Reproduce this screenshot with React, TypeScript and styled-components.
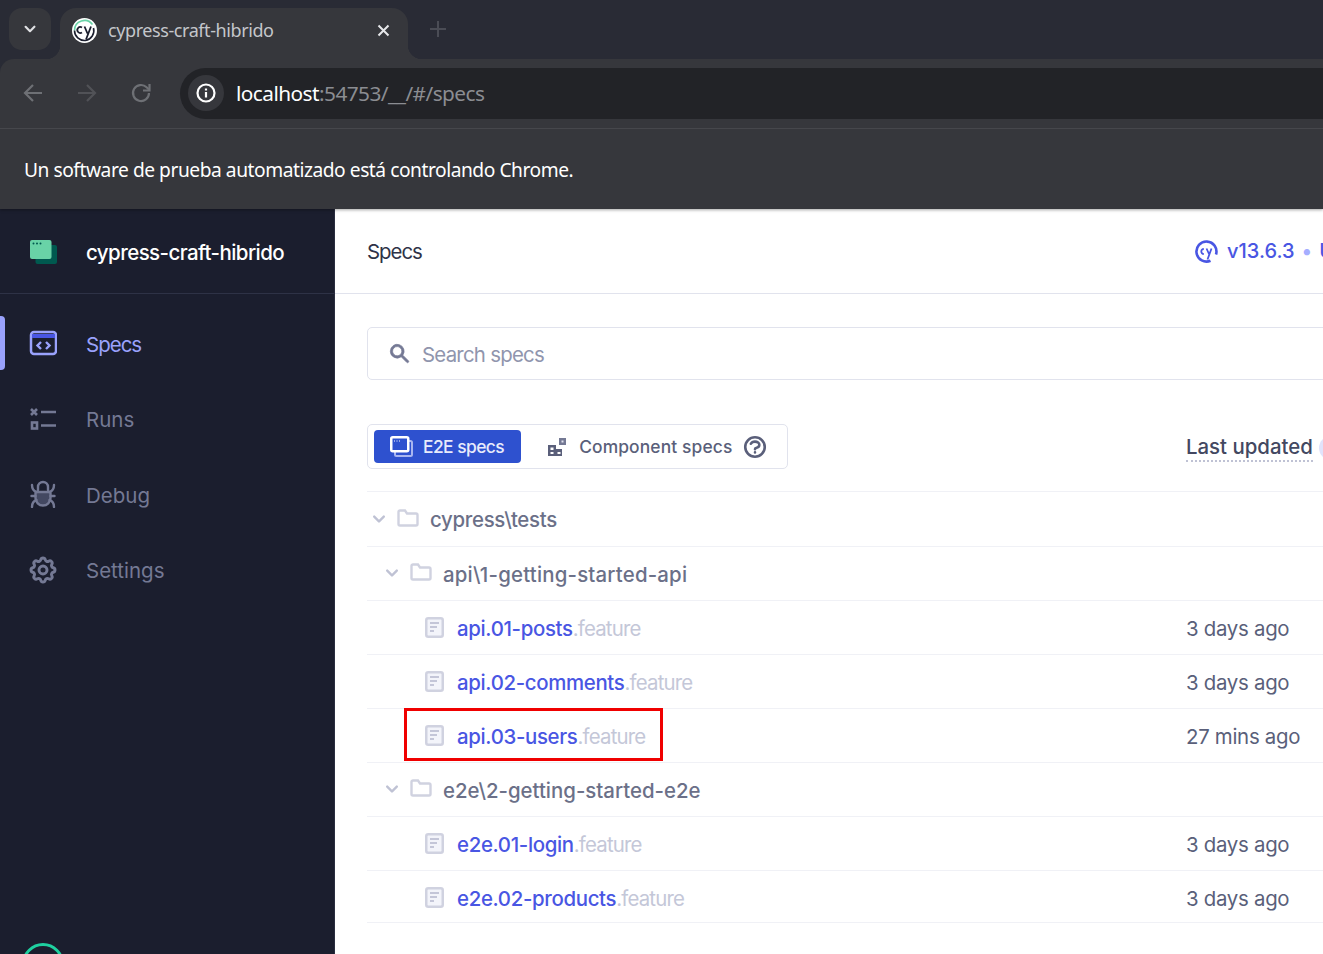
import styled, { createGlobalStyle } from 'styled-components';
import { HiChevronDown, HiOutlineCog, HiOutlineQuestionMarkCircle, HiSearch } from 'react-icons/hi';

const GlobalStyle = createGlobalStyle`
  html, body {
    margin: 0;
    padding: 0;
    height: 100%;
    overflow: hidden;
    background: #fff;
  }
  * { box-sizing: border-box; }
`;

const Page = styled.div`
  width: 1323px;
  height: 954px;
  overflow: hidden;
  display: flex;
  flex-direction: column;
`;

const BrowserFrame = styled.div`
  flex: none;
  font-family: 'Noto Sans', sans-serif;
  background: #292b35;
  position: relative;
  z-index: 2;
  box-shadow: 0 1px 3px rgba(0, 0, 0, 0.35);
`;

const TabStrip = styled.div`
  height: 59px;
  display: flex;
  align-items: flex-start;
  padding: 8px 0 0 9px;
`;

const TabSearch = styled.div`
  width: 42px;
  height: 42px;
  border-radius: 13px;
  background: #36373c;
  color: #dfe0e3;
  display: flex;
  align-items: center;
  justify-content: center;
  font-size: 22px;
`;

const Tab = styled.div`
  position: relative;
  margin-left: 9px;
  width: 348px;
  height: 51px;
  background: #36373c;
  border-radius: 16px 16px 0 0;
  display: flex;
  align-items: center;
  padding: 0 16px 7px 12px;
  color: #c4c6cb;
  font-size: 18px;
  letter-spacing: -0.42px;

  &::before,
  &::after {
    content: '';
    position: absolute;
    bottom: 0;
    width: 14px;
    height: 14px;
  }
  &::before {
    left: -14px;
    background: radial-gradient(circle at 0 0, transparent 14px, #36373c 14.5px);
  }
  &::after {
    right: -14px;
    background: radial-gradient(circle at 100% 0, transparent 14px, #36373c 14.5px);
  }
`;

const TabTitle = styled.span`
  margin-left: 11px;
  flex: 1;
`;

const TabClose = styled.svg`
  width: 13px;
  height: 13px;
  margin-right: 2px;
`;

const NewTab = styled.svg`
  width: 16px;
  height: 16px;
  margin: 13px 0 0 22px;
`;

const Toolbar = styled.div`
  height: 70px;
  background: #36373c;
  border-top-left-radius: 14px;
  display: flex;
  align-items: center;
  padding: 0 0 1px 21px;
  border-bottom: 1px solid #46474c;
`;

const NavIcon = styled.svg`
  width: 24px;
  height: 24px;
  margin-right: 30px;
  flex: none;
`;

const Omnibox = styled.div`
  margin: 0 -100px 0 -3px;
  flex: 1;
  height: 51px;
  border-radius: 26px;
  background: #222327;
  display: flex;
  align-items: center;
  padding-left: 8px;
  font-size: 20.8px;
  letter-spacing: -0.54px;
  color: #8b8d92;
`;

const InfoChip = styled.div`
  width: 36px;
  height: 36px;
  border-radius: 50%;
  background: #36373c;
  display: flex;
  align-items: center;
  justify-content: center;
  margin-right: 12px;
`;

const Host = styled.span`
  color: #fff;
`;

const InfoBar = styled.div`
  height: 80px;
  background: #36373c;
  display: flex;
  align-items: center;
  padding: 0 0 0 24px;
  color: #fff;
  font-size: 19.2px;
  letter-spacing: -0.46px;
`;

const Body = styled.div`
  flex: 1;
  min-height: 0;
  display: flex;
  font-family: 'Inter', sans-serif;
`;

const Sidebar = styled.aside`
  flex: none;
  width: 335px;
  height: 745px;
  background: #1b1e2e;
  display: flex;
  flex-direction: column;
  overflow: hidden;
  border-right: 1px solid #2a2d3f;
`;

const Project = styled.div`
  flex: none;
  height: 85px;
  border-bottom: 1px solid #2e3246;
  display: flex;
  align-items: center;
  gap: 29px;
  padding: 2px 0 0 30px;
  color: #fff;
  font-size: 20.5px;
  font-weight: 500;
  letter-spacing: -0.57px;
`;

const Nav = styled.nav`
  padding-top: 22px;
  display: flex;
  flex-direction: column;
  gap: 21.6px;
`;

const NavItem = styled.div<{ $active?: boolean }>`
  position: relative;
  height: 54px;
  display: flex;
  align-items: center;
  gap: 29px;
  padding: 2px 0 0 29px;
  font-size: 20.5px;
  letter-spacing: ${(p) => (p.$active ? '-1px' : '0')};
  color: ${(p) => (p.$active ? '#9aa2fc' : '#747994')};

  ${(p) =>
    p.$active &&
    `&::before {
      content: '';
      position: absolute;
      left: 0;
      top: 0;
      bottom: 0;
      width: 5px;
      background: #9aa2fc;
      border-radius: 0 4px 4px 0;
    }`}

  svg {
    flex: none;
    width: 28px;
    height: 28px;
    margin-top: -2px;
  }
`;

const GearIcon = styled(HiOutlineCog)`
  && {
    width: 32px;
    height: 32px;
    margin: -2px -2px 0 -2px;
    stroke-width: 2.2;
  }
`;

const StatusRing = styled.div`
  flex: none;
  margin: auto 0 0 22px;
  width: 42px;
  height: 42px;
  border-radius: 50%;
  border: 3px solid #1fd0a0;
  transform: translateY(31px);
`;

const Main = styled.main`
  flex: none;
  width: 1200px;
  background: #fff;
  color: #434861;
`;

const Header = styled.header`
  height: 85px;
  border-bottom: 1px solid #e1e3ed;
  padding: 0 0 0 32px;
  display: grid;
  grid-template-columns: 828px 1fr;
  align-items: center;
  font-size: 20.4px;
`;

const Title = styled.h1`
  margin: 0;
  font: inherit;
  letter-spacing: -1px;
  color: #2e3247;
`;

const Version = styled.div`
  display: flex;
  align-items: center;
  color: #4956e3;
  font-weight: 500;
  font-size: 20px;
  white-space: nowrap;

  svg {
    margin-right: 9px;
  }
`;

const VersionDot = styled.span`
  color: #a5aeff;
  margin: 0 7px;
`;

const Content = styled.div`
  padding: 33px 0 0 32px;
`;

const SearchBox = styled.div`
  height: 53px;
  border: 1px solid #e1e3ed;
  border-radius: 5px;
  display: flex;
  align-items: center;
  gap: 11px;
  padding-left: 20px;
  font-size: 20.4px;
  color: #9095ad;

  svg {
    width: 23px;
    height: 23px;
    color: #747994;
    stroke: currentColor;
    stroke-width: 0.6;
  }
`;

const SearchPlaceholder = styled.span`
  padding-top: 2px;
  letter-spacing: -0.75px;
`;

const Controls = styled.div`
  margin-top: 44px;
  display: grid;
  grid-template-columns: 819px 1fr;
  align-items: center;
  padding-bottom: 22px;
  border-bottom: 1px solid #f0f1f6;
`;

const Segments = styled.div`
  width: 421px;
  height: 45px;
  border: 1px solid #e1e3ed;
  border-radius: 5px;
  padding: 5px 6px;
  display: flex;
  align-items: center;
  gap: 26px;
`;

const Segment = styled.div<{ $active?: boolean }>`
  height: 33px;
  display: flex;
  align-items: center;
  gap: ${(p) => (p.$active ? 10 : 12)}px;
  font-size: 17.4px;
  font-weight: 500;
  letter-spacing: ${(p) => (p.$active ? '-0.55px' : '0.13px')};
  border-radius: 4px;
  white-space: nowrap;
  padding: ${(p) => (p.$active ? '0 17px 0 16px' : '0')};
  background: ${(p) => (p.$active ? '#2e51cf' : 'transparent')};
  color: ${(p) => (p.$active ? '#e8ebfb' : '#5a5f7a')};
`;

const HelpIcon = styled(HiOutlineQuestionMarkCircle)`
  width: 26px;
  height: 26px;
  margin-left: -2px;
  color: #5a5f7a;
  stroke-width: 2.4;
`;

const LastUpdated = styled.div`
  display: flex;
  align-items: center;
  gap: 6px;
  padding-top: 2px;
  font-size: 20.4px;
  font-weight: 500;
  color: #434861;
`;

const DottedLabel = styled.span`
  border-bottom: 2px dotted #bfc2d4;
  line-height: 26px;
`;

const Badge = styled.span`
  width: 24px;
  height: 24px;
  border-radius: 50%;
  background: #e1e3fb;
`;

const Row = styled.div<{ $indent: number; $height?: number }>`
  position: relative;
  height: ${(p) => p.$height ?? 54}px;
  display: grid;
  grid-template-columns: 819px 1fr;
  align-items: center;
  border-bottom: 1px solid #f0f1f6;
  padding: ${(p) => (p.$height === 52 ? '1px 0 0' : '0 0 1px')};
  font-size: 20.4px;

  & > div:first-child {
    padding-left: ${(p) => p.$indent}px;
  }
`;

const RowLabel = styled.div`
  display: flex;
  align-items: center;
`;

const Chevron = styled(HiChevronDown)`
  width: 24px;
  height: 24px;
  color: #bfc2d4;
  margin-right: 6px;
`;

const FolderName = styled.span<{ $tracking: number }>`
  margin-left: 11px;
  padding-top: 2px;
  font-weight: 500;
  letter-spacing: ${(p) => p.$tracking}px;
  color: #6b7088;
`;

const SpecLink = styled.span`
  margin-left: 13px;
  padding-top: 2px;
  font-weight: 500;
  letter-spacing: -0.33px;
  color: #4956e3;
`;

const Extension = styled.span`
  font-weight: 400;
  letter-spacing: -0.8px;
  color: #c4c7d8;
`;

const Age = styled.div`
  padding-top: 2px;
  letter-spacing: -0.28px;
  color: #5a5f7a;
`;

const Highlight = styled.div`
  position: absolute;
  left: 37px;
  top: -1px;
  width: 259px;
  height: 53px;
  border: 3px solid #f00000;
  pointer-events: none;
`;

const VersionMark = () => (
  <svg width="23" height="23" viewBox="0 0 23 23" fill="none" style={{ flex: 'none' }}>
    <path d="M15.500 20.700A10 10 0 1 1 21 14.500" stroke="#4956e3" strokeWidth="2.600" />
    <path d="M8.800 9a2.500 2.500 0 1 0 0 5M11.500 8.500l2.500 5.500M16.500 8.500l-4 11" stroke="#4956e3" strokeWidth="1.800" />
  </svg>
);

const TabFavicon = () => (
  <svg width="25" height="25" viewBox="0 0 25 25" fill="none" style={{ flex: 'none' }}>
    <circle cx="12.500" cy="12.500" r="12.500" fill="#fff" />
    <path d="M2.500 12.500a10 10 0 0 1 18-6" stroke="#69d3a7" strokeWidth="1.600" />
    <path d="M21.500 10a10 10 0 0 1-8 12.500a10 10 0 0 1-11-10" stroke="#1b1e2e" strokeWidth="1.600" />
    <path d="M10 9.500a3 3 0 1 0 0 5M12.500 8.500l3 7M19 8.500l-5 13" stroke="#1b1e2e" strokeWidth="1.800" />
  </svg>
);

const ProjectLogo = () => (
  <svg width="27" height="24" viewBox="0 0 27 24" style={{ flex: 'none' }}>
    <rect x="5.500" y="5" width="21.500" height="19" rx="2" fill="#00594f" />
    <rect x="0" y="0" width="21.500" height="19" rx="2" fill="#69d3a7" />
    <circle cx="3.500" cy="3.500" r="1" fill="#00594f" />
    <circle cx="7" cy="3.500" r="1" fill="#00594f" />
    <circle cx="10.500" cy="3.500" r="1" fill="#00594f" />
  </svg>
);

const SpecsIcon = () => (
  <svg viewBox="0 0 28 28" fill="none">
    <rect x="2" y="3" width="25" height="22" rx="3" stroke="#9aa2fc" strokeWidth="2.500" />
    <rect x="3" y="5" width="23" height="4" fill="#4956e3" />
    <path d="M12 13 8.500 16.500 12 20M17 13l3.500 3.500L17 20" stroke="#9aa2fc" strokeWidth="2.400" />
  </svg>
);

const RunsIcon = () => (
  <svg viewBox="0 0 28 28" fill="none" stroke="#747994" strokeWidth="2.600">
    <path d="M2 4l6 6M8 4l-6 6M12 7h15M12 20.500h15" />
    <rect x="3" y="17.500" width="5" height="6" />
  </svg>
);

const DebugIcon = () => (
  <svg viewBox="0 0 28 28" fill="none" stroke="#747994" strokeWidth="2.400" strokeLinecap="round">
    <path d="M9 10V7a5 5 0 0 1 10 0v3" />
    <path d="M7.500 12h13a1 1 0 0 1 1 1v5a7.500 7.500 0 0 1-15 0v-5a1 1 0 0 1 1-1Z" fill="#434861" />
    <path d="M3 5c0 4 1.500 6 4.500 7M25 5c0 4-1.500 6-4.500 7M2.500 16h4M25.500 16h-4M3 27c0-4 1.500-6 4.500-7M25 27c0-4-1.500-6-4.500-7" />
  </svg>
);

const E2EIcon = () => (
  <svg width="23" height="21" viewBox="0 0 23 21" fill="none" style={{ flex: 'none' }}>
    <rect x="5" y="5" width="17" height="15" rx="1.500" stroke="#a9b6f0" strokeWidth="2" />
    <rect x="1.250" y="1.250" width="17" height="14" rx="1.500" fill="#2e51cf" stroke="#fff" strokeWidth="2.500" />
    <path d="M4 5h1M6.500 5h1M9 5h1" stroke="#fff" />
  </svg>
);

const ComponentIcon = () => (
  <svg width="20" height="20" viewBox="0 0 20 20" style={{ flex: 'none' }}>
    <path d="M1 8h8v11H1z" fill="#5a5f7a" />
    <path d="M9 12h6v7H9z" fill="#5a5f7a" />
    <rect x="12" y="1" width="7" height="7" fill="#747994" />
    <rect x="3.500" y="10.500" width="3" height="2.500" fill="#fff" />
    <rect x="3.500" y="15" width="3" height="2" fill="#fff" />
    <rect x="10.500" y="15" width="3" height="2" fill="#fff" />
    <rect x="14.500" y="3.500" width="2" height="2" fill="#e1e3ed" />
  </svg>
);

const FolderIcon = () => (
  <svg width="22" height="18" viewBox="0 0 22 18" fill="none" style={{ flex: 'none', marginTop: -2 }}>
    <path
      d="M1.500 3a1.500 1.500 0 0 1 1.500-1.500h5l2 3h9A1.500 1.500 0 0 1 20.500 6v9a1.500 1.500 0 0 1-1.500 1.500H3A1.500 1.500 0 0 1 1.500 15Z"
      stroke="#d0d2e0"
      strokeWidth="2.400"
    />
  </svg>
);

const DocIcon = () => (
  <svg width="19" height="21" viewBox="0 0 19 21" fill="none" style={{ flex: 'none' }}>
    <rect x="1.250" y="1.250" width="16.500" height="18.500" rx="2" fill="#f3f4fa" stroke="#d0d2e0" strokeWidth="2.500" />
    <path d="M5 6h9M5 10h7M5 14h4" stroke="#c4c6d8" strokeWidth="2.200" />
  </svg>
);

type Spec = { name: string; age: string; highlighted?: boolean; height?: number };
type Folder = { name: string; tracking: number; specs: Spec[] };

const folders: Folder[] = [
  {
    name: 'api\\1-getting-started-api',
    tracking: 0.2,
    specs: [
      { name: 'api.01-posts', age: '3 days ago' },
      { name: 'api.02-comments', age: '3 days ago' },
      { name: 'api.03-users', age: '27 mins ago', highlighted: true },
    ],
  },
  {
    name: 'e2e\\2-getting-started-e2e',
    tracking: 0,
    specs: [
      { name: 'e2e.01-login', age: '3 days ago' },
      { name: 'e2e.02-products', age: '3 days ago', height: 52 },
    ],
  },
];

export default function App() {
  return (
    <Page>
      <GlobalStyle />
      <BrowserFrame>
        <TabStrip>
          <TabSearch>
            <HiChevronDown />
          </TabSearch>
          <Tab>
            <TabFavicon />
            <TabTitle>cypress-craft-hibrido</TabTitle>
            <TabClose viewBox="0 0 13 13">
              <path d="M1.500 1.500l10 10M11.500 1.500l-10 10" stroke="#e6e7ea" strokeWidth="2" />
            </TabClose>
          </Tab>
          <NewTab viewBox="0 0 16 16">
            <path d="M8 0v16M0 8h16" stroke="#4a4c55" strokeWidth="2" />
          </NewTab>
        </TabStrip>
        <Toolbar>
          <NavIcon viewBox="0 0 24 24" fill="none" stroke="#6e7075" strokeWidth="2.200">
            <path d="M21 12H4M12 4l-8 8 8 8" />
          </NavIcon>
          <NavIcon viewBox="0 0 24 24" fill="none" stroke="#515257" strokeWidth="2.200">
            <path d="M3 12h17M12 4l8 8-8 8" />
          </NavIcon>
          <NavIcon viewBox="0 0 24 24" fill="none" stroke="#6e7075" strokeWidth="2.200">
            <path d="M20 12a8 8 0 1 1-2.400-5.700L20 8.500" />
            <path d="M20.500 3v6.500H14" />
          </NavIcon>
          <Omnibox>
            <InfoChip>
              <svg width="20" height="20" viewBox="0 0 20 20" fill="none">
                <circle cx="10" cy="10" r="8.500" stroke="#fff" strokeWidth="2.200" />
                <path d="M10 9v5.500M10 5.500v2" stroke="#fff" strokeWidth="2.200" />
              </svg>
            </InfoChip>
            <Host>localhost</Host>:54753/__/#/specs
          </Omnibox>
        </Toolbar>
        <InfoBar>Un software de prueba automatizado está controlando Chrome.</InfoBar>
      </BrowserFrame>
      <Body>
        <Sidebar>
          <Project>
            <ProjectLogo />
            cypress-craft-hibrido
          </Project>
          <Nav>
            <NavItem $active>
              <SpecsIcon />
              Specs
            </NavItem>
            <NavItem>
              <RunsIcon />
              Runs
            </NavItem>
            <NavItem>
              <DebugIcon />
              Debug
            </NavItem>
            <NavItem>
              <GearIcon />
              Settings
            </NavItem>
          </Nav>
          <StatusRing />
        </Sidebar>
        <Main>
          <Header>
            <Title>Specs</Title>
            <Version>
              <VersionMark />
              v13.6.3
              <VersionDot>•</VersionDot>
              Upgrade
            </Version>
          </Header>
          <Content>
            <SearchBox>
              <HiSearch />
              <SearchPlaceholder>Search specs</SearchPlaceholder>
            </SearchBox>
            <Controls>
              <Segments>
                <Segment $active>
                  <E2EIcon />
                  E2E specs
                </Segment>
                <Segment>
                  <ComponentIcon />
                  Component specs
                  <HelpIcon />
                </Segment>
              </Segments>
              <LastUpdated>
                <DottedLabel>Last updated</DottedLabel>
                <Badge />
              </LastUpdated>
            </Controls>
            <Row $indent={0} $height={55}>
              <RowLabel>
                <Chevron />
                <FolderIcon />
                <FolderName $tracking={-0.3}>cypress\tests</FolderName>
              </RowLabel>
            </Row>
            {folders.map((folder) => (
              <div key={folder.name}>
                <Row $indent={13}>
                  <RowLabel>
                    <Chevron />
                    <FolderIcon />
                    <FolderName $tracking={folder.tracking}>{folder.name}</FolderName>
                  </RowLabel>
                </Row>
                {folder.specs.map((spec) => (
                  <Row key={spec.name} $indent={58} $height={spec.height}>
                    <RowLabel>
                      <DocIcon />
                      <SpecLink>
                        {spec.name}
                        <Extension>.feature</Extension>
                      </SpecLink>
                    </RowLabel>
                    <Age>{spec.age}</Age>
                    {spec.highlighted && <Highlight />}
                  </Row>
                ))}
              </div>
            ))}
          </Content>
        </Main>
      </Body>
    </Page>
  );
}
